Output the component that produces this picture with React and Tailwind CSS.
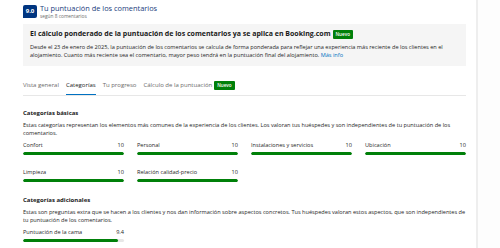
import React from 'react';

const basicas = [
  { label: 'Confort', value: '10', pct: 100 },
  { label: 'Personal', value: '10', pct: 100 },
  { label: 'Instalaciones y servicios', value: '10', pct: 100 },
  { label: 'Ubicación', value: '10', pct: 100 },
  { label: 'Limpieza', value: '10', pct: 100 },
  { label: 'Relación calidad-precio', value: '10', pct: 100 },
];

const adicionales = [{ label: 'Puntuación de la cama', value: '9.4', pct: 94 }];

function ScoreBar({ label, value, pct }) {
  return (
    <div className="flex flex-col">
      <div className="flex justify-between items-center h-[10px] text-[5.6px] text-[#262626]">
        <span>{label}</span>
        <span>{value}</span>
      </div>
      <div className="mt-[2px] h-[3px] bg-[#e7e7e7] rounded-full overflow-hidden">
        <div className="h-full bg-[#008009] rounded-full" style={{ width: `${pct}%` }} />
      </div>
    </div>
  );
}

function Badge({ children }) {
  return (
    <span className="inline-flex items-center h-[9px] px-[3px] ml-[2px] bg-[#008009] text-white text-[4.6px] font-semibold rounded-[1px] align-middle">
      {children}
    </span>
  );
}

export default function App() {
  const tabs = ['Vista general', 'Categorías', 'Tu progreso', 'Cálculo de la puntuación'];

  return (
    <div className="w-[500px] h-[248px] bg-white flex overflow-hidden" style={{ fontFamily: '"Open Sans", sans-serif' }}>
      <main className="w-[476px] pl-[23px] pr-[10px]">
        {/* Header */}
        <div className="flex items-start gap-[3px] pt-[5px] h-[24px]">
          <div className="w-[14px] h-[13px] bg-[#003580] text-white text-[6px] font-bold flex items-center justify-center rounded-[2px] rounded-bl-none">
            9.0
          </div>
          <div className="flex flex-col -mt-[1px]">
            <span className="text-[7.4px] leading-[9px] text-[#1a3d7c]">Tu puntuación de los comentarios</span>
            <span className="text-[4.8px] leading-[6px] text-[#6b6b6b]">según 8 comentarios</span>
          </div>
        </div>

        {/* Info box */}
        <div className="bg-[#f5f5f5] h-[42px] px-[7px] pt-[5px]">
          <div className="flex items-center h-[10px] text-[7px] font-bold text-[#1a1a1a]">
            El cálculo ponderado de la puntuación de los comentarios ya se aplica en Booking.com
            <Badge>Nuevo</Badge>
          </div>
          <p className="mt-[4px] text-[5.6px] leading-[8px] text-[#262626]">
            Desde el 23 de enero de 2025, la puntuación de los comentarios se calcula de forma ponderada para reflejar una experiencia más reciente de los clientes en el alojamiento. Cuanto más reciente sea el comentario, mayor peso tendrá en la puntuación final del alojamiento. <a className="text-[#0071c2]">Más info</a>
          </p>
        </div>

        {/* Tabs */}
        <div className="mt-[13px] flex gap-[7px] border-b border-[#e7e7e7] h-[17px]">
          {tabs.map((t, i) => (
            <div
              key={t}
              className={`flex items-center pb-[2px] text-[6px] border-b-[1.5px] ${
                i === 1 ? 'border-[#0071c2] text-[#1a1a1a]' : 'border-transparent text-[#6b6b6b]'
              }`}
            >
              {t}
              {i === 3 && <Badge>Nuevo</Badge>}
            </div>
          ))}
        </div>

        {/* Categorías básicas */}
        <section className="mt-[13px]">
          <h3 className="text-[6px] font-bold text-[#1a1a1a] leading-[8px]">Categorías básicas</h3>
          <p className="mt-[4px] text-[5.6px] leading-[8px] text-[#262626]">
            Estas categorías representan los elementos más comunes de la experiencia de los clientes. Los valoran tus huéspedes y son independientes de tu puntuación de los comentarios.
          </p>
          <div className="mt-[3px] grid grid-cols-4 gap-x-[13px] gap-y-[12px]">
            {basicas.map((c) => (
              <ScoreBar key={c.label} {...c} />
            ))}
          </div>
        </section>

        {/* Categorías adicionales */}
        <section className="mt-[14px]">
          <h3 className="text-[6px] font-bold text-[#1a1a1a] leading-[8px]">Categorías adicionales</h3>
          <p className="mt-[4px] text-[5.6px] leading-[8px] text-[#262626]">
            Estas son preguntas extra que se hacen a los clientes y nos dan información sobre aspectos concretos. Tus huéspedes valoran estos aspectos, que son independientes de tu puntuación de los comentarios.
          </p>
          <div className="mt-[3px] grid grid-cols-4 gap-x-[13px]">
            {adicionales.map((c) => (
              <ScoreBar key={c.label} {...c} />
            ))}
          </div>
        </section>
      </main>
      <aside className="flex-1 border-l-2 border-[#eeeeee] bg-[#fdfdfd]" />
    </div>
  );
}
